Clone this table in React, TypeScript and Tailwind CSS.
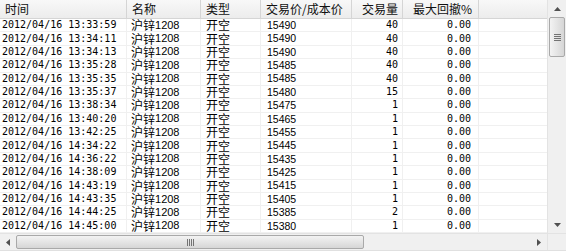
import React from 'react';

const rows = [
  ['13:33:59', '15490', '40'],
  ['13:34:11', '15490', '40'],
  ['13:34:13', '15490', '40'],
  ['13:35:28', '15485', '40'],
  ['13:35:35', '15485', '40'],
  ['13:35:37', '15480', '15'],
  ['13:38:34', '15475', '1'],
  ['13:40:20', '15465', '1'],
  ['13:42:25', '15455', '1'],
  ['14:34:22', '15445', '1'],
  ['14:36:22', '15435', '1'],
  ['14:38:09', '15425', '1'],
  ['14:43:19', '15415', '1'],
  ['14:43:35', '15405', '1'],
  ['14:44:25', '15385', '2'],
  ['14:45:00', '15380', '1'],
];

const cjk = "font-['Noto_Sans_CJK_SC',sans-serif]";
const mono = "font-['DejaVu_Sans_Mono','Noto_Sans_CJK_SC',monospace]";

const Head = ({ w, children, right }: { w: string; children?: React.ReactNode; right?: boolean }) => (
  <div
    className={`${w} h-full shrink-0 flex items-center border-r border-[#d5d5d5] text-[12px] leading-none text-[#111] ${cjk} ${
      right ? 'justify-end pr-[6px]' : 'pl-[5px]'
    }`}
  >
    {children}
  </div>
);

const App = () => {
  return (
    <div className="w-[566px] h-[252px] bg-white overflow-hidden flex flex-col">
      <div className="flex h-[233px]">
        {/* list */}
        <div className="w-[547px] flex flex-col">
          <div className="h-[19px] flex border-b border-[#d5d5d5] bg-linear-to-b from-[#f8f8f8] to-[#ececec]">
            <Head w="w-[127px]">
              <span className="pl-[-1px]">时间</span>
            </Head>
            <Head w="w-[74px]">名称</Head>
            <Head w="w-[60px]">类型</Head>
            <Head w="w-[91px]">交易价/成本价</Head>
            <Head w="w-[51px]">
              <span className="pl-[5px]">交易量</span>
            </Head>
            <Head w="w-[76px]">
              <span className="pl-[5px]">最大回撤%</span>
            </Head>
            <div className="flex-1" />
          </div>
          {rows.map(([t, p, v]) => (
            <div key={t} className="h-[13.375px] flex border-b border-[#f0f0f0] text-black">
              <div className={`w-[127px] shrink-0 border-r border-[#f0f0f0] pl-[2px] flex items-center text-[10px] leading-none ${mono}`}>
                2012/04/16 {t}
              </div>
              <div className={`w-[74px] shrink-0 border-r border-[#f0f0f0] pl-[4px] flex items-center text-[12px] leading-none ${cjk}`}>
                沪锌<span className="font-['Liberation_Sans',sans-serif] text-[11px]">1208</span>
              </div>
              <div className={`w-[60px] shrink-0 border-r border-[#f0f0f0] pl-[5px] flex items-center text-[12px] leading-none ${cjk}`}>
                开空
              </div>
              <div className="w-[91px] shrink-0 border-r border-[#f0f0f0] pl-[6px] flex items-center text-[10.5px] leading-none font-['Liberation_Sans',sans-serif]">
                {p}
              </div>
              <div className={`w-[51px] shrink-0 border-r border-[#f0f0f0] pr-[4px] flex items-center justify-end text-[10px] leading-none ${mono}`}>
                {v}
              </div>
              <div className={`w-[76px] shrink-0 border-r border-[#f0f0f0] pr-[7px] flex items-center justify-end text-[10px] leading-none ${mono}`}>
                0.00
              </div>
              <div className="flex-1" />
            </div>
          ))}
        </div>
        {/* vertical scrollbar */}
        <div className="w-[19px] flex flex-col bg-[#f0f0f0] border-l border-[#e3e3e3]">
          <div className="h-[17px] flex items-center justify-center">
            <svg width="7" height="4" viewBox="0 0 7 4">
              <path d="M3.5 0 L7 4 L0 4 Z" fill="#505050" />
            </svg>
          </div>
          <div className="mx-[1px] h-[40px] rounded-[2px] border border-[#a9a9a9] bg-linear-to-r from-[#f3f3f3] to-[#d6d6d6] flex flex-col items-center justify-center gap-[1px]">
            {[0, 1, 2, 3].map((i) => (
              <div key={i} className="w-[7px] h-[1px] bg-[#737373]" />
            ))}
          </div>
          <div className="flex-1" />
          <div className="h-[17px] flex items-center justify-center">
            <svg width="7" height="4" viewBox="0 0 7 4">
              <path d="M0 0 L7 0 L3.5 4 Z" fill="#505050" />
            </svg>
          </div>
        </div>
      </div>
      {/* horizontal scrollbar */}
      <div className="flex h-[17px] border-t border-[#e3e3e3]">
        <div className="w-[547px] flex bg-[#f0f0f0]">
          <div className="w-[16px] flex items-center justify-center">
            <svg width="4" height="7" viewBox="0 0 4 7">
              <path d="M0 3.5 L4 0 L4 7 Z" fill="#505050" />
            </svg>
          </div>
          <div className="w-[348px] my-[1px] rounded-[2px] border border-[#a9a9a9] bg-linear-to-b from-[#f3f3f3] to-[#d6d6d6] flex items-center justify-center gap-[1px]">
            {[0, 1, 2, 3].map((i) => (
              <div key={i} className="w-[1px] h-[7px] bg-[#737373]" />
            ))}
          </div>
          <div className="flex-1" />
          <div className="w-[17px] flex items-center justify-center">
            <svg width="4" height="7" viewBox="0 0 4 7">
              <path d="M0 0 L4 3.5 L0 7 Z" fill="#505050" />
            </svg>
          </div>
        </div>
        <div className="w-[19px] bg-[#f0f0f0] border-l border-[#e3e3e3]" />
      </div>
      <div className="flex-1 bg-white border-t border-[#e0e0e0]" />
    </div>
  );
};

export default App;
